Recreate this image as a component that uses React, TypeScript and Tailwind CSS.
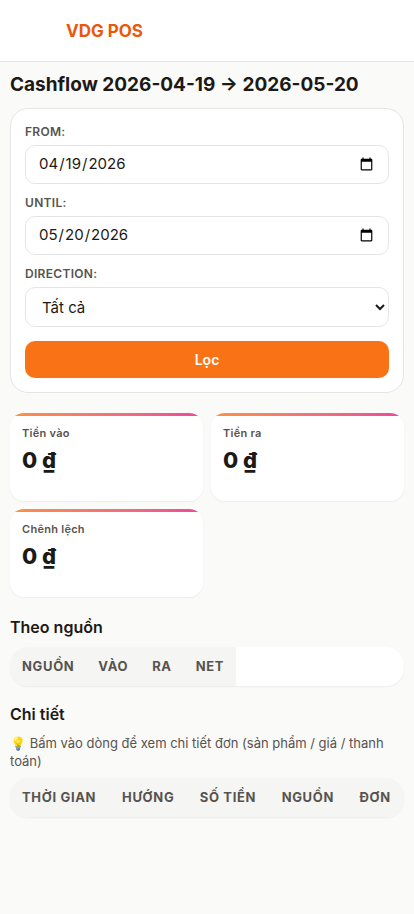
import { useState } from "react";
import clsx from "clsx";

type Field = {
  id: string;
  label: string;
};

type DataTableProps = {
  columns: string[];
  fullWidth?: boolean;
};

const totals = [
  { label: "Tiền vào", value: "0 ₫" },
  { label: "Tiền ra", value: "0 ₫" },
  { label: "Chênh lệch", value: "0 ₫" },
];

const sourceColumns = ["Nguồn", "Vào", "Ra", "Net"];
const detailColumns = ["Thời gian", "Hướng", "Số tiền", "Nguồn", "Đơn"];

const controlClass =
  "w-full rounded-[10px] border border-[#e5e5e5] bg-white px-3 text-[15px] text-[#1c1917]";

const FieldLabel = ({ id, label }: Field) => (
  <label
    htmlFor={id}
    className="mb-1 block text-xs leading-[18px] font-semibold tracking-wide text-[#57534e] uppercase"
  >
    {label}
  </label>
);

const DateField = ({ id, label, initial }: Field & { initial: string }) => {
  const [value, setValue] = useState(initial);

  return (
    <div>
      <FieldLabel id={id} label={label} />
      <input
        id={id}
        type="date"
        value={value}
        onChange={(e) => setValue(e.target.value)}
        className={clsx(controlClass, "h-[39px]")}
      />
    </div>
  );
};

const StatCard = ({ label, value }: { label: string; value: string }) => (
  <div className="min-h-22 overflow-hidden rounded-[14px] bg-white shadow-[0_1px_2px_rgba(0,0,0,0.06)]">
    <div className="h-[3px] bg-linear-to-r from-[#fb923c] to-[#ec4899]" />
    <div className="px-3 pt-2">
      <div className="text-[11px] leading-[18px] font-semibold tracking-wide text-[#57534e]">
        {label}
      </div>
      <div className="mt-1 text-[22px] leading-7 font-extrabold">{value}</div>
    </div>
  </div>
);

const DataTable = ({ columns, fullWidth }: DataTableProps) => (
  <div className="overflow-x-auto rounded-[18px] bg-white shadow-[0_1px_2px_rgba(0,0,0,0.06)]">
    <table className={clsx("border-collapse", { "w-full": fullWidth })}>
      <thead>
        <tr className="bg-[#f5f5f4]">
          {columns.map((column) => (
            <th
              key={column}
              scope="col"
              className="px-3 py-[10px] text-left text-[13px] leading-[19px] font-bold tracking-wider whitespace-nowrap text-[#57534e] uppercase"
            >
              {column}
            </th>
          ))}
        </tr>
      </thead>
    </table>
  </div>
);

const App = () => {
  const [direction, setDirection] = useState("all");

  return (
    <div className="min-h-screen bg-[#fafaf9] font-['Inter','Noto_Sans',sans-serif] text-[#1c1917]">
      <header className="flex h-[62px] items-center border-b border-[#e5e7eb] bg-white pr-4 pl-[66px]">
        <span className="text-[17px] leading-6 font-bold text-[#ea580c]">
          VDG POS
        </span>
      </header>

      <main className="px-[10px] pt-2 pb-6">
        <h1 className="mb-2 text-[19px] leading-[30px] font-bold">
          Cashflow 2026-04-19 → 2026-05-20
        </h1>

        <form
          onSubmit={(e) => e.preventDefault()}
          className="flex flex-col gap-[10px] rounded-[18px] border border-[#e5e5e5] bg-white p-[14px]"
        >
          <DateField id="from" label="From:" initial="2026-04-19" />
          <DateField id="until" label="Until:" initial="2026-05-20" />
          <div>
            <FieldLabel id="direction" label="Direction:" />
            <select
              id="direction"
              value={direction}
              onChange={(e) => setDirection(e.target.value)}
              className={clsx(controlClass, "h-10")}
            >
              <option value="all">Tất cả</option>
            </select>
          </div>
          <button
            type="submit"
            className="mt-1 h-[37px] rounded-[10px] bg-[#f97316] text-sm font-semibold text-white"
          >
            Lọc
          </button>
        </form>

        <section className="mt-5 mb-[18px] grid grid-cols-2 gap-2">
          {totals.map((total) => (
            <StatCard key={total.label} {...total} />
          ))}
        </section>

        <h2 className="mt-4 mb-2 text-base leading-6 font-semibold">
          Theo nguồn
        </h2>
        <DataTable columns={sourceColumns} />

        <h2 className="mt-4 mb-2 text-base leading-6 font-semibold">
          Chi tiết
        </h2>
        <p className="mb-2 text-[13px] leading-[18px] text-[#57534e]">
          💡 Bấm vào dòng để xem chi tiết đơn (sản phẩm / giá / thanh toán)
        </p>
        <DataTable columns={detailColumns} fullWidth />
      </main>
    </div>
  );
};

export default App;
